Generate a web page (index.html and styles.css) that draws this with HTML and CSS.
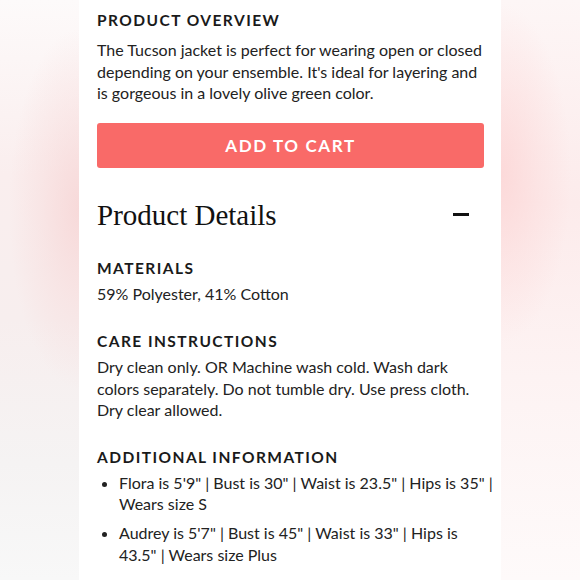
FILE: index.html
```html
<!DOCTYPE html>
<html>
<head>
<meta charset="utf-8">
<link rel="stylesheet" href="styles.css">
</head>
<body>
<div class="page">
  <div class="side side-left"></div>
  <main class="card">
    <h3 class="label first">PRODUCT OVERVIEW</h3>
    <p class="text intro">The Tucson jacket is perfect for wearing open or closed depending on your ensemble. It's ideal for layering and is gorgeous in a lovely olive green color.</p>
    <button class="cart">ADD TO CART</button>
    <div class="details-head">
      <h2 class="details-title">Product Details</h2>
      <span class="minus"></span>
    </div>
    <h3 class="label">MATERIALS</h3>
    <p class="text">59% Polyester, 41% Cotton</p>
    <h3 class="label gap">CARE INSTRUCTIONS</h3>
    <p class="text">Dry clean only. OR Machine wash cold. Wash dark colors separately. Do not tumble dry. Use press cloth. Dry clear allowed.</p>
    <h3 class="label gap">ADDITIONAL INFORMATION</h3>
    <ul class="list">
      <li>Flora is 5'9" | Bust is 30" | Waist is 23.5" | Hips is 35" | Wears size S</li>
      <li>Audrey is 5'7" | Bust is 45" | Waist is 33" | Hips is 43.5" | Wears size Plus</li>
    </ul>
  </main>
  <div class="side side-right"></div>
</div>
</body>
</html>
```
FILE: styles.css
```css
* { box-sizing: border-box; }
html, body { margin: 0; padding: 0; }
body {
  width: 580px;
  height: 580px;
  overflow: hidden;
  font-family: "Lato", "Open Sans", sans-serif;
  color: #1c1c1c;
}
.page {
  display: flex;
  width: 580px;
  height: 580px;
}
.side { flex: 0 0 79px; height: 580px; }
.side-left {
  background:
    radial-gradient(ellipse 70px 180px at 100% 36%, rgba(247,214,214,0.85) 0%, rgba(247,214,214,0.35) 55%, rgba(247,214,214,0) 100%),
    linear-gradient(180deg, #fdfafa 0%, #faeeee 30%, #f7eeee 55%, #f5f3f3 80%, #f8f8f8 100%);
}
.side-right {
  background:
    radial-gradient(ellipse 70px 170px at 0% 30%, rgba(252,214,214,0.85) 0%, rgba(252,214,214,0.35) 55%, rgba(252,214,214,0) 100%),
    linear-gradient(180deg, #fdf6f6 0%, #fcebeb 35%, #fdf3f3 65%, #fefafa 100%);
}
.card {
  flex: 0 0 422px;
  background: #fff;
  padding: 0 17px 0 18px;
}
.label {
  margin: 0;
  font-size: 15.5px;
  font-weight: 700;
  letter-spacing: 1.45px;
  line-height: 20px;
  color: #1a1a1a;
}
.label.first { padding-top: 10px; }
.text {
  margin: 5.5px 0 0;
  font-size: 16px;
  line-height: 21.5px;
  color: #222;
}
.text.intro { margin-top: 9px; }
.cart {
  display: block;
  width: 100%;
  height: 45px;
  margin-top: 19px;
  border: none;
  border-radius: 3px;
  background: #f96a68;
  color: #fff;
  font-family: inherit;
  font-size: 17px;
  font-weight: 700;
  letter-spacing: 1.6px;
}
.details-head {
  display: flex;
  align-items: center;
  justify-content: space-between;
  margin-top: 30px;
  margin-bottom: 26px;
}
.details-title {
  margin: 0;
  font-family: "Liberation Serif", "DejaVu Serif", serif;
  font-weight: 400;
  font-size: 29px;
  line-height: 34px;
  color: #111;
}
.minus {
  width: 16px;
  height: 3px;
  background: #111;
  margin-right: 15px;
}
.label.gap { margin-top: 26px; }
.list {
  margin: 5px -11px 0 0;
  padding-left: 22px;
  font-size: 16px;
  line-height: 21.5px;
  color: #222;
}
.list li + li { margin-top: 7.5px; }
```
